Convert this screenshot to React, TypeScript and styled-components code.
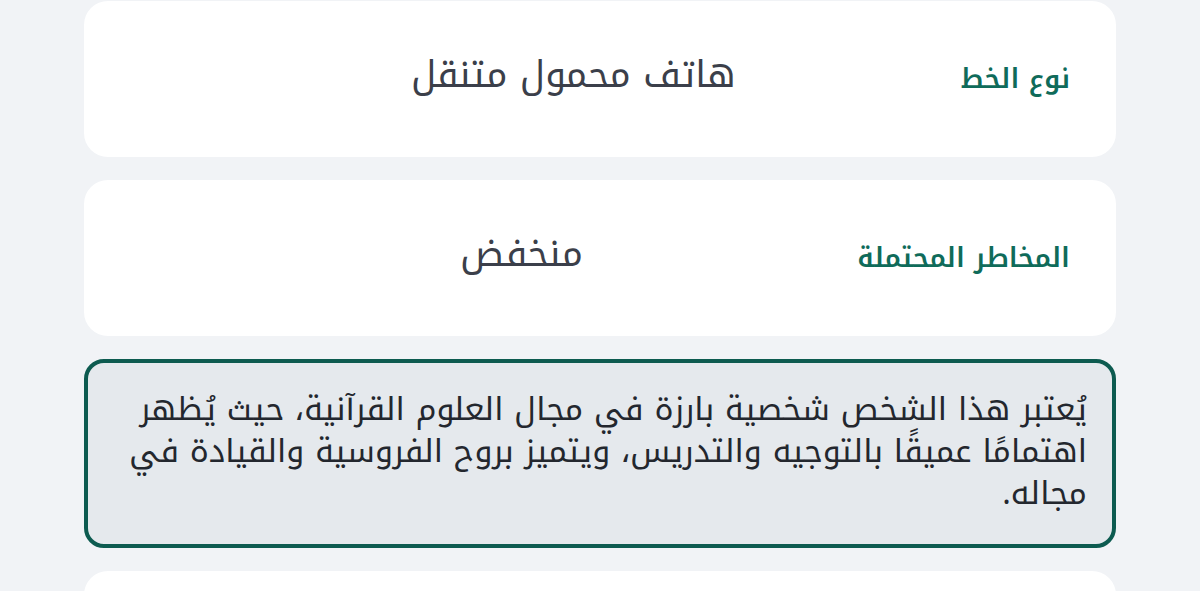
import React from "react";
import styled, { createGlobalStyle } from "styled-components";

const Global = createGlobalStyle`
  html, body { margin: 0; padding: 0; }
  body {
    background: #f1f3f6;
    font-family: "Noto Kufi Arabic", "Noto Sans", sans-serif;
  }
`;

const Page = styled.main`
  direction: rtl;
  display: flex;
  flex-direction: column;
  gap: 23px;
  padding: 1px 84px 0;
  height: 591px;
  box-sizing: border-box;
  overflow: hidden;
`;

const Card = styled.section`
  flex: none;
  height: 156px;
  background: #ffffff;
  border-radius: 24px;
  display: flex;
  align-items: center;
  gap: 24px;
  padding: 0 46px 0 126px;
  box-sizing: border-box;
`;

const Label = styled.span`
  color: #0f6b5a;
  font-size: 27px;
  font-weight: 600;
  line-height: 40px;
  white-space: nowrap;
`;

const Value = styled.span`
  flex: 1;
  text-align: center;
  color: #3b3f4a;
  font-size: 37px;
  font-weight: 400;
  line-height: 50px;
  margin-top: -8px;
`;

const Note = styled.div`
  flex: none;
  height: 189px;
  background: #e5e9ed;
  border: 4px solid #0d5b50;
  border-radius: 20px;
  padding: 26px 25px;
  color: #23272e;
  font-size: 32px;
  line-height: 42px;
  box-sizing: border-box;
`;

const rows = [
  { label: "نوع الخط", value: "هاتف محمول متنقل" },
  { label: "المخاطر المحتملة", value: "منخفض" },
];

export default function App() {
  return (
    <>
      <Global />
      <Page>
        {rows.map((r) => (
          <Card key={r.label}>
            <Label>{r.label}</Label>
            <Value>{r.value}</Value>
          </Card>
        ))}
        <Note>
          يُعتبر هذا الشخص شخصية بارزة في مجال العلوم القرآنية، حيث يُظهر اهتمامًا عميقًا بالتوجيه والتدريس، ويتميز بروح الفروسية والقيادة في مجاله.
        </Note>
        <Card />
      </Page>
    </>
  );
}
